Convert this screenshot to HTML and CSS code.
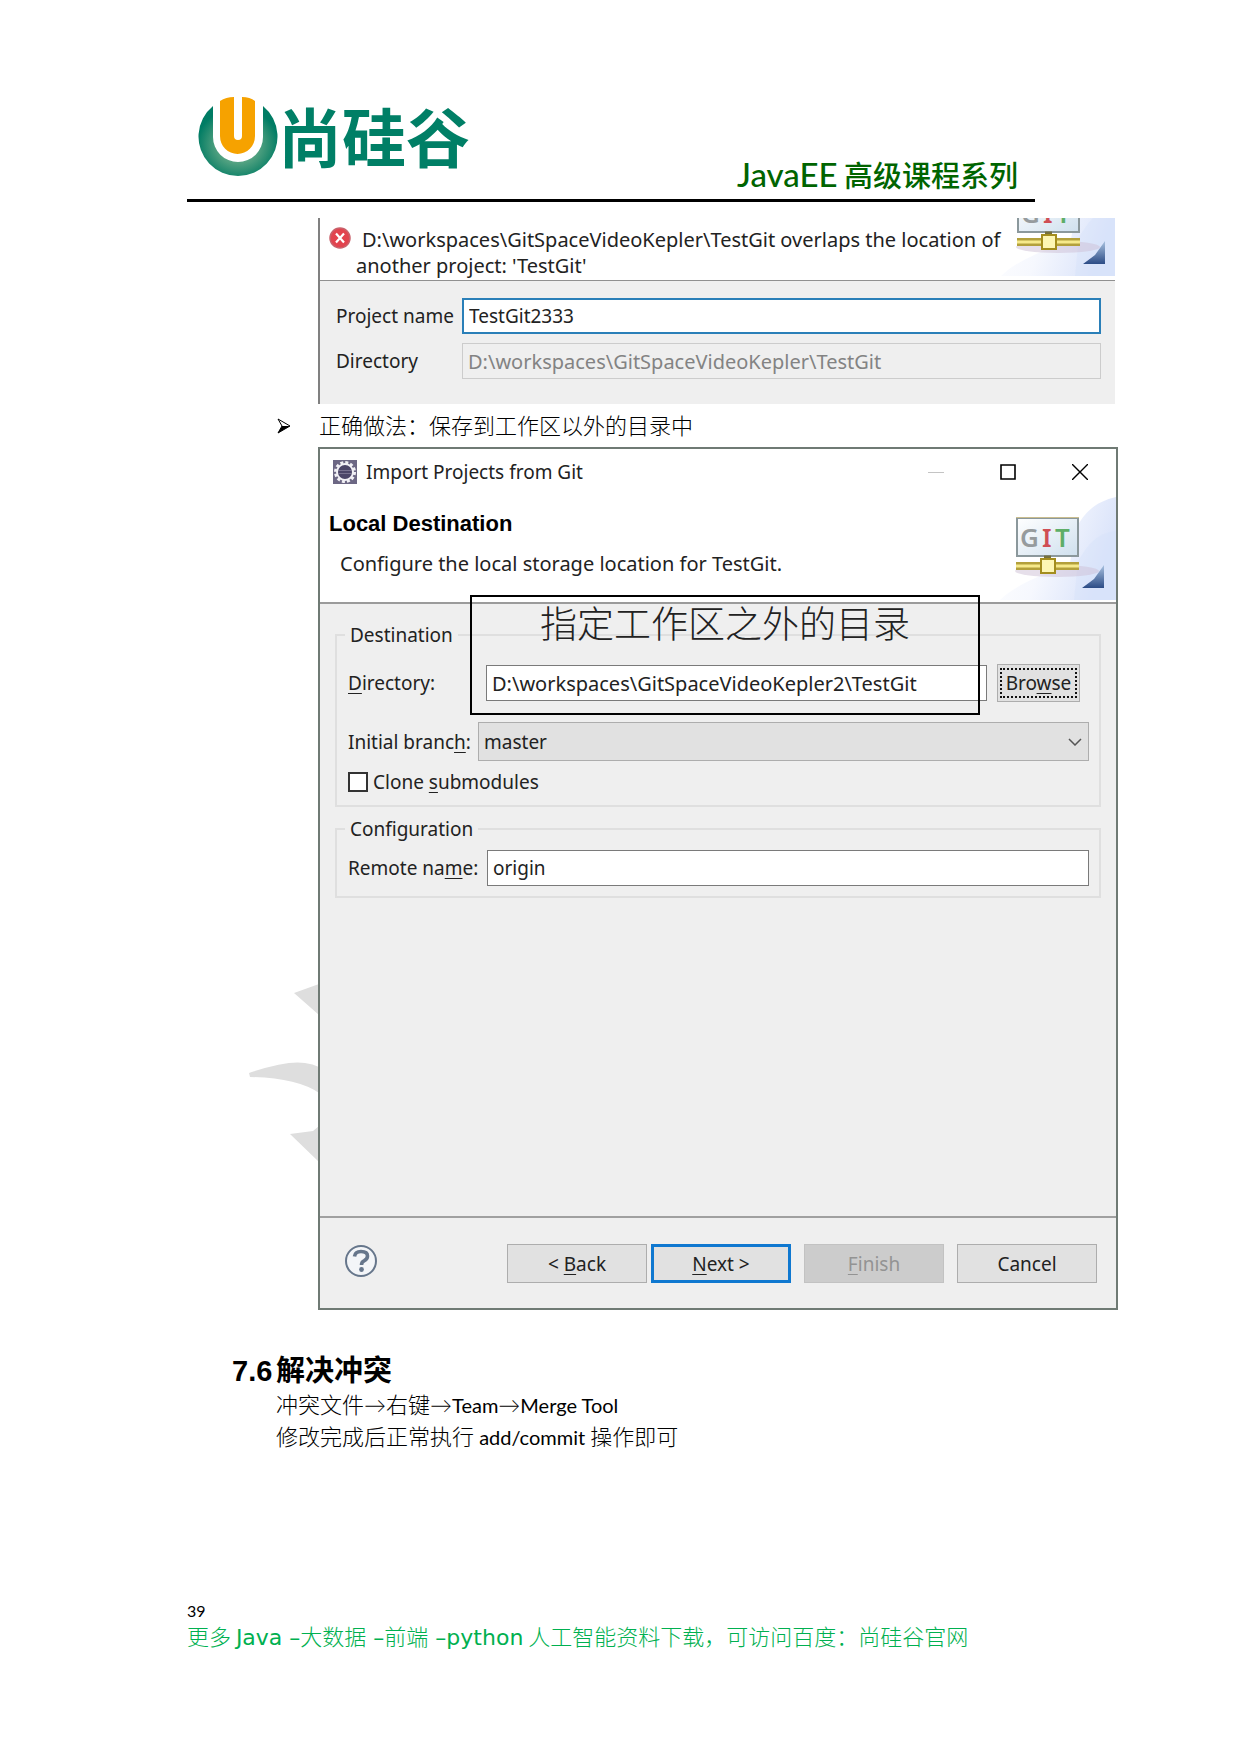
FILE: index.html
```html
<!DOCTYPE html>
<html lang="zh-CN">
<head>
<meta charset="utf-8">
<meta name="viewport" content="width=device-width, initial-scale=1">
<title>JavaEE 高级课程系列</title>
<link rel="stylesheet" href="styles.css">
</head>
<body>
<svg class="defs" aria-hidden="true">
  <defs>
    <linearGradient id="sky" x1="0" y1="0" x2="1" y2="0.3">
      <stop offset="0" stop-color="#fff"/><stop offset="0.5" stop-color="#f6f8fe"/><stop offset="1" stop-color="#dbe4fa"/>
    </linearGradient>
    <linearGradient id="panel" x1="0" y1="0" x2="1" y2="1">
      <stop offset="0" stop-color="#fff"/><stop offset="1" stop-color="#cfe0ee"/>
    </linearGradient>
    <linearGradient id="corner" x1="0" y1="0" x2="0" y2="1">
      <stop offset="0" stop-color="#a9c2e0"/><stop offset="1" stop-color="#2c4c86"/>
    </linearGradient>
    <symbol id="git-banner" viewBox="0 0 116 103">
      <path d="M116 0C98 4 84 14 76 32L70 66C50 76 20 84 0 103H116Z" fill="url(#sky)"/>
      <path d="M116 34C96 36 88 48 78 64L74 103H116Z" fill="#d5e1fa" opacity=".4"/>
      <ellipse cx="57" cy="74" rx="42" ry="6" fill="#cdbfd6" opacity=".5"/>
      <rect x="17" y="21" width="61" height="38" fill="url(#panel)" stroke="#8b989c" stroke-width="2"/>
      <path d="M16 20.500H79" stroke="#c9bd8e" stroke-width="1"/>
      <g font-family="Noto Sans, sans-serif" font-weight="600" font-size="26">
        <text x="20" y="50" fill="#969b9d">G</text>
        <text x="42" y="50" fill="#cf4e54">I</text>
        <text x="55" y="50" fill="#5eae67">T</text>
      </g>
      <path d="M16 69H79" stroke="#b3a03c" stroke-width="8"/>
      <path d="M16 69H79" stroke="#f6e98b" stroke-width="3"/>
      <path d="M44 60H51" stroke="#75703f" stroke-width="3"/>
      <rect x="41" y="62" width="14" height="14" fill="#fdf6b4" stroke="#a38d1e" stroke-width="2"/>
      <path d="M82 91L94 82L104 68V91Z" fill="url(#corner)"/>
    </symbol>
  </defs>
</svg>

<div class="page">
  <header class="page-header">
    <div class="brand">
      <svg class="brand-mark" viewBox="0 0 80 82" aria-hidden="true">
        <defs>
          <radialGradient id="ring" cx=".5" cy=".55" r=".52">
            <stop offset=".35" stop-color="#6cae8b"/><stop offset=".75" stop-color="#2c8f72"/><stop offset="1" stop-color="#007c64"/>
          </radialGradient>
        </defs>
        <path d="M15 10A39.500 39.500 0 1 0 65 10V41A25 25 0 0 1 15 41Z" fill="url(#ring)"/>
        <path d="M22 5Q28 1 36 1V40A4 4 0 0 0 44 40V1Q52 1 57 5V40A17.500 18 0 0 1 22 40Z" fill="#f6a200"/>
      </svg>
      <span class="brand-name">尚硅谷</span>
    </div>
    <p class="series"><span class="series-latin">JavaEE</span> 高级课程系列</p>
  </header>

  <main class="content">
    <section class="shot shot-error">
      <div class="error-head">
        <svg class="error-icon" viewBox="0 0 22 22" aria-hidden="true">
          <circle cx="11" cy="11" r="10" fill="#e2434e" stroke="#c9606a" stroke-width="1.500"/>
          <path d="M7 6.500L15 15.500M15 6.500L7 15.500" stroke="#fff" stroke-width="2.200"/>
        </svg>
        <p class="error-text">D:\workspaces\GitSpaceVideoKepler\TestGit overlaps the location of<br>another project: 'TestGit'</p>
        <svg class="banner banner-cut" aria-hidden="true"><use href="#git-banner"/></svg>
      </div>
      <form class="project-form">
        <label for="project-name">Project name</label>
        <input class="field field-focus" id="project-name" type="text" value="TestGit2333">
        <label for="project-dir">Directory</label>
        <input class="field field-path" id="project-dir" type="text" value="D:\workspaces\GitSpaceVideoKepler\TestGit" disabled>
      </form>
    </section>

    <ul class="steps">
      <li>
        <svg class="arrow" viewBox="0 0 14 16" aria-hidden="true"><path d="M1 1L13 8L1 15L5 8Z" fill="#fff" stroke="#000"/><path d="M5 8H13L1 15Z"/></svg>
        正确做法：保存到工作区以外的目录中
      </li>
    </ul>

    <section class="shot dialog">
      <svg class="watermark" viewBox="0 0 70 180" aria-hidden="true">
        <path d="M45 9L70 0V31ZM0 89Q38 76 56 79Q64 80 70 83V109Q48 94 1 93ZM41 150L64 147L70 142V178Z" fill="#dedede"/>
      </svg>
      <div class="dialog-head">
        <div class="title-bar">
          <svg class="app-icon" viewBox="0 0 24 24" aria-hidden="true">
            <rect width="24" height="24" fill="#6c6784"/>
            <circle cx="12" cy="12" r="9" fill="none" stroke="#f1f0f5" stroke-width="4" stroke-dasharray="2.800 1.912"/>
            <circle cx="12" cy="12" r="8" fill="#4b4568" stroke="#f1f0f5" stroke-width="2"/>
            <path d="M6 10.500H18M6 13.500H18" stroke="#77718f"/>
          </svg>
          <h2 class="window-title">Import Projects from Git</h2>
          <div class="window-controls">
            <button type="button" aria-label="Minimize" disabled><svg viewBox="0 0 16 16"><path d="M0 8.500H16" stroke="#c4c4c4"/></svg></button>
            <button type="button" aria-label="Maximize"><svg viewBox="0 0 16 16"><path d="M1 1H15V15H1Z" fill="none" stroke="#000" stroke-width="1.600"/></svg></button>
            <button type="button" aria-label="Close"><svg viewBox="0 0 16 16"><path d="M0 0L16 16M16 0L0 16" stroke="#000" stroke-width="1.400"/></svg></button>
          </div>
        </div>
        <h3 class="step-title">Local Destination</h3>
        <p class="step-note">Configure the local storage location for TestGit.</p>
        <svg class="banner" aria-hidden="true"><use href="#git-banner"/></svg>
      </div>

      <form class="dialog-form">
        <fieldset class="group">
          <legend>Destination</legend>
          <div class="row row-dir">
            <label for="directory"><u>D</u>irectory:</label>
            <input class="field field-path" id="directory" type="text" value="D:\workspaces\GitSpaceVideoKepler2\TestGit">
            <button class="browse" type="button"><span>Bro<u>w</u>se</span></button>
          </div>
          <div class="row row-branch">
            <label for="branch">Initial branc<u>h</u>:</label>
            <div class="select-wrap">
              <select id="branch"><option>master</option></select>
              <svg class="chevron" viewBox="0 0 14 8" aria-hidden="true"><path d="M1 1L7 7L13 1" fill="none" stroke="#555" stroke-width="1.500"/></svg>
            </div>
          </div>
          <label class="check"><input type="checkbox"><span>Clone <u>s</u>ubmodules</span></label>
        </fieldset>
        <fieldset class="group group-config">
          <legend>Configuration</legend>
          <div class="row row-remote">
            <label for="remote">Remote na<u>m</u>e:</label>
            <input class="field" id="remote" type="text" value="origin">
          </div>
        </fieldset>
      </form>
      <p class="callout">指定工作区之外的目录</p>

      <div class="dialog-foot">
        <button class="help" type="button" aria-label="Help">
          <svg viewBox="0 0 34 34"><circle cx="17" cy="17" r="15" fill="#f3f5f8" stroke="#66768b" stroke-width="2"/><path d="M10.500 12.500Q11 7.500 17 7.500Q23.500 7.500 23.500 12Q23.500 15 20 16.800Q17.500 18 17.500 21" fill="none" stroke="#66768b" stroke-width="3.600"/><circle cx="17.500" cy="25.500" r="2.400" fill="#66768b"/></svg>
        </button>
        <div class="actions">
          <div class="pair">
            <button class="btn" type="button"><span>&lt; <u>B</u>ack</span></button>
            <button class="btn btn-primary" type="button"><span><u>N</u>ext &gt;</span></button>
          </div>
          <button class="btn" type="button" disabled><span><u>F</u>inish</span></button>
          <button class="btn" type="button">Cancel</button>
        </div>
      </div>
    </section>

    <section class="chapter">
      <h1><span class="chapter-no">7.6</span>解决冲突</h1>
      <p>冲突文件→右键→<span class="latin">Team</span>→<span class="latin">Merge Tool</span></p>
      <p>修改完成后正常执行<span class="latin"> add/commit </span>操作即可</p>
    </section>
  </main>

  <footer class="page-footer">
    <p class="page-no">39</p>
    <p class="more">更多 <span class="more-latin">Java –</span>大数据<span class="more-latin"> –</span>前端<span class="more-latin"> –python</span> 人工智能资料下载，可访问百度：尚硅谷官网</p>
  </footer>
</div>
</body>
</html>
```
FILE: styles.css
```css
* {
  box-sizing: border-box;
}

body,
h1,
h2,
h3,
p,
ul,
fieldset {
  margin: 0;
  padding: 0;
}

body {
  background: #fff;
  color: #000;
  font-family: Lato, "Noto Sans CJK SC", sans-serif;
}

.defs {
  position: absolute;
  width: 0;
  height: 0;
}

.page {
  padding: 96px 122px 90px 187px;
}

/* Page header */
.page-header {
  display: flex;
  justify-content: space-between;
  align-items: flex-end;
  height: 106px;
  margin-right: 83px;
  border-bottom: 3px solid #000;
}

.brand {
  display: flex;
  align-self: flex-start;
  padding-left: 11px;
}

.brand-mark {
  width: 80px;
  height: 82px;
}

.brand-name {
  color: #007f66;
  font: 700 64px/76px "Noto Sans CJK SC", sans-serif;
}

.series {
  padding-right: 17px;
  color: #006400;
  font: 500 29px/50px "Noto Sans CJK SC", sans-serif;
}

.series-latin {
  font-family: Lato, sans-serif;
  font-size: 33px;
}

/* Window captures */
.shot {
  position: relative;
  margin-left: 131px;
  background: #efefef;
  color: #222;
  font: 19px/26px "Noto Sans", sans-serif;
}

.shot button,
.shot input,
.shot select {
  margin: 0;
  color: inherit;
  font: inherit;
}

.shot u {
  text-underline-offset: 3px;
}

.field {
  width: 100%;
  min-width: 0;
  height: 36px;
  padding: 0 5px;
  border: 1px solid #7a7a7a;
  border-radius: 0;
  background: #fff;
}

.shot .field-path {
  font-size: 20px;
}

.shot .field:disabled {
  border-color: #ccc;
  background: #efefef;
  color: #838383;
}

.field-focus {
  border: 2px solid #2a7fb8;
}

.banner {
  position: absolute;
  right: 0;
  top: 48px;
  width: 116px;
  height: 103px;
}

.banner-cut {
  top: -45px;
  right: -2px;
}

.shot-error {
  margin-top: 16px;
  margin-right: 3px;
  border-left: 2px solid #808080;
}

.error-head {
  position: relative;
  display: flex;
  gap: 5px;
  height: 63px;
  padding: 9px 0 0 9px;
  overflow: hidden;
  border-bottom: 1px solid #909090;
  background: #fff;
}

.error-icon {
  flex: none;
  width: 22px;
  height: 22px;
}

.error-text {
  font-size: 20px;
  text-indent: 6px;
}

.project-form {
  display: grid;
  grid-template-columns: 118px 1fr;
  gap: 9px 8px;
  align-items: center;
  padding: 17px 14px 25px 16px;
}

/* Bulleted step */
.steps {
  list-style: none;
  font-size: 22px;
  font-weight: 300;
  line-height: 43px;
}

.steps li {
  display: flex;
  align-items: center;
  gap: 28px;
  padding-left: 90px;
}

.arrow {
  width: 14px;
  height: 16px;
}

/* Import dialog */
.dialog {
  border: 2px solid #6f7a74;
}

.watermark {
  position: absolute;
  top: 535px;
  left: -71px;
  width: 70px;
  height: 180px;
  z-index: -1;
}

.dialog-head {
  position: relative;
  height: 155px;
  border-bottom: 2px solid #9b9b9b;
  background: #fff;
}

.title-bar {
  display: flex;
  align-items: center;
  gap: 9px;
  height: 45px;
  padding: 0 28px 0 13px;
}

.app-icon {
  width: 24px;
  height: 24px;
}

.window-title {
  flex: 1;
  font-size: 19px;
  font-weight: 400;
}

.window-controls {
  display: flex;
  gap: 56px;
}

.window-controls button {
  width: 16px;
  height: 16px;
  padding: 0;
  border: 0;
  background: none;
}

.window-controls svg {
  display: block;
}

.step-title {
  padding: 16px 0 0 9px;
  color: #000;
  font: 700 22px/28px "Liberation Sans", sans-serif;
}

.step-note {
  padding: 13px 0 0 20px;
  font-size: 20px;
}

.dialog-form {
  padding: 18px 15px 0 15px;
}

.group {
  min-width: 0;
  border: 2px solid #dfdfdf;
  padding: 0 10px 10px 11px;
}

.group legend {
  margin-left: -3px;
  padding: 0 5px;
}

.row {
  display: grid;
  align-items: center;
}

.row-dir {
  grid-template-columns: 138px 1fr 83px;
  margin-top: 16px;
  padding-right: 9px;
}

.row-dir .field {
  width: calc(100% - 10px);
}

.browse {
  height: 38px;
  padding: 2px;
  border: 1px solid #adadad;
  background: #e1e1e1;
}

.browse span {
  display: block;
  border: 2px dotted #111;
}

.row-branch {
  grid-template-columns: 130px 1fr;
  margin-top: 20px;
}

.select-wrap {
  position: relative;
}

.select-wrap select {
  display: block;
  width: 100%;
  height: 39px;
  padding: 0 5px;
  border: 1px solid #adadad;
  border-radius: 0;
  appearance: none;
  background: #e1e1e1;
}

.chevron {
  position: absolute;
  top: 16px;
  right: 7px;
  width: 14px;
  height: 8px;
}

.check {
  display: flex;
  align-items: center;
  gap: 5px;
  margin-top: 8px;
}

.check input {
  width: 20px;
  height: 20px;
  border: 2px solid #333;
  appearance: none;
  background: #fff;
}

.group-config {
  margin-top: 9px;
}

.row-remote {
  grid-template-columns: 139px 1fr;
  margin-top: 8px;
}

/* Note drawn over the form */
.callout {
  position: absolute;
  top: 146px;
  left: 150px;
  right: 136px;
  height: 120px;
  border: 2px solid #000;
  font: 300 37px/50px "Noto Sans CJK SC", sans-serif;
  text-align: center;
}

.dialog-foot {
  display: flex;
  align-items: flex-start;
  justify-content: space-between;
  margin-top: 318px;
  padding: 26px 19px 25px 24px;
  border-top: 2px solid #a0a0a0;
}

.help {
  width: 34px;
  height: 34px;
  padding: 0;
  border: 0;
  background: none;
}

.help svg {
  display: block;
}

.actions {
  display: flex;
  gap: 13px;
}

.pair {
  display: flex;
  gap: 4px;
}

.btn {
  width: 140px;
  height: 39px;
  padding: 0;
  border: 1px solid #adadad;
  background: #e1e1e1;
}

.btn-primary {
  border: 3px solid #0f78d0;
}

.shot .btn:disabled {
  background: #ccc;
  border-color: #c2c2c2;
  color: #939393;
}

/* Chapter text */
.chapter {
  padding: 43px 0 0 89px;
  font-size: 22px;
  font-weight: 300;
  line-height: 32px;
}

.chapter h1 {
  margin-left: -44px;
  font: 700 29px/36px "Liberation Sans", "Noto Sans CJK SC", sans-serif;
}

.chapter-no {
  display: inline-block;
  width: 44px;
}

.latin {
  font-size: 20px;
  font-weight: 400;
}

/* Page footer */
.page-footer {
  padding-top: 146px;
}

.page-no {
  font-size: 16px;
  line-height: 24px;
}

.more {
  color: #00b050;
  font: 300 22px/24px "Noto Sans CJK SC", sans-serif;
}

.more-latin {
  font-family: "DejaVu Sans", sans-serif;
  font-weight: 400;
}
```
